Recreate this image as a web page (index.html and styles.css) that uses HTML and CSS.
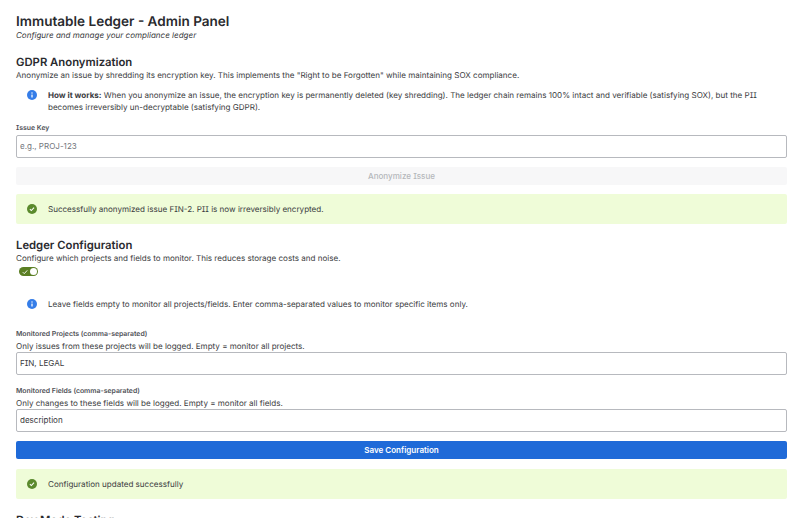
FILE: index.html
```html
<!DOCTYPE html>
<html>
<head>
	<meta charset="utf-8">
	<title>Immutable Ledger - Admin Panel</title>
	<link rel="stylesheet" href="styles.css">
</head>
<body>

<div class="page">
	<h1 class="page-title">Immutable Ledger - Admin Panel</h1>
	<p class="page-sub">Configure and manage your compliance ledger</p>

	<h2 class="section-title">GDPR Anonymization</h2>
	<p class="section-desc">Anonymize an issue by shredding its encryption key. This implements the "Right to be Forgotten" while maintaining SOX compliance.</p>

	<div class="flag">
		<svg class="flag-icon" viewBox="0 0 16 16"><circle cx="8" cy="8" r="8" fill="#357de8"/><rect x="7" y="7" width="2" height="5" rx=".6" fill="#fff"/><circle cx="8" cy="4.8" r="1.1" fill="#fff"/></svg>
		<div class="flag-text"><b>How it works:</b> When you anonymize an issue, the encryption key is permanently deleted (key shredding). The ledger chain remains 100% intact and verifiable (satisfying SOX), but the PII becomes irreversibly un-decryptable (satisfying GDPR).</div>
	</div>

	<label class="field-label label-issue">Issue Key</label>
	<input class="text-input input-issue" type="text" placeholder="e.g., PROJ-123">
	<button class="btn btn-disabled" type="button">Anonymize Issue</button>

	<div class="flag flag-success">
		<svg class="flag-icon" viewBox="0 0 16 16"><circle cx="8" cy="8" r="8" fill="#5b8a2d"/><path d="M4.6 8.2l2.3 2.3 4.4-4.7" fill="none" stroke="#fff" stroke-width="1.7"/></svg>
		<div class="flag-text">Successfully anonymized issue FIN-2. PII is now irreversibly encrypted.</div>
	</div>

	<h2 class="section-title">Ledger Configuration</h2>
	<p class="section-desc">Configure which projects and fields to monitor. This reduces storage costs and noise.</p>

	<div class="toggle">
		<svg class="toggle-check" viewBox="0 0 8 8"><path d="M1 4.2l2 2 4-4.4" fill="none" stroke="#fff" stroke-width="1.2"/></svg>
		<span class="toggle-knob"></span>
	</div>

	<div class="flag flag-config">
		<svg class="flag-icon" viewBox="0 0 16 16"><circle cx="8" cy="8" r="8" fill="#357de8"/><rect x="7" y="7" width="2" height="5" rx=".6" fill="#fff"/><circle cx="8" cy="4.8" r="1.1" fill="#fff"/></svg>
		<div class="flag-text">Leave fields empty to monitor all projects/fields. Enter comma-separated values to monitor specific items only.</div>
	</div>

	<label class="field-label label-projects">Monitored Projects (comma-separated)</label>
	<p class="field-help">Only issues from these projects will be logged. Empty = monitor all projects.</p>
	<input class="text-input" type="text" value="FIN, LEGAL">

	<label class="field-label label-fields">Monitored Fields (comma-separated)</label>
	<p class="field-help">Only changes to these fields will be logged. Empty = monitor all fields.</p>
	<input class="text-input" type="text" value="description">

	<button class="btn btn-primary" type="button">Save Configuration</button>

	<div class="flag flag-success flag-last">
		<svg class="flag-icon" viewBox="0 0 16 16"><circle cx="8" cy="8" r="8" fill="#5b8a2d"/><path d="M4.6 8.2l2.3 2.3 4.4-4.7" fill="none" stroke="#fff" stroke-width="1.7"/></svg>
		<div class="flag-text">Configuration updated successfully</div>
	</div>

	<h2 class="section-title">Dev Mode Testing</h2>
</div>

</body>
</html>
```

FILE: styles.css
```css
* {
	box-sizing: border-box;
}

html, body {
	height: 100%;
	overflow: hidden;
}

body {
	margin: 0;
	font-family: Inter, "Liberation Sans", sans-serif;
	font-size: 8.05px;
	font-feature-settings: "cv08";
	line-height: 12px;
	color: #3a3b40;
	background: #fff;
	text-rendering: geometricPrecision;
}

.page {
	padding: 14px 19px 0 16px;
}

.page-title {
	margin: 0;
	font-size: 13.55px;
	font-feature-settings: normal;
	line-height: 16px;
	font-weight: 600;
	color: #292a2e;
}

.page-sub {
	margin: 0;
	line-height: 11px;
	font-style: italic;
}

.section-title {
	margin: 14.5px 0 0;
	font-size: 11.3px;
	line-height: 13px;
	font-weight: 600;
	color: #292a2e;
}

.section-desc {
	margin: 0;
}

/* Message boxes */
.flag {
	display: flex;
	align-items: flex-start;
	gap: 11px;
	padding: 8px 11px;
	line-height: 12.6px;
	border-radius: 2px;
}

.flag-icon {
	flex: none;
	width: 10px;
	height: 10px;
	margin-top: 1px;
}

.flag-text {
	flex: 1;
}

.flag-success {
	margin-top: 9px;
	padding: 9px 11px 8.9px;
	background: #effcd8;
}

.flag-config {
	margin-top: 13.7px;
}

.flag-last {
	margin-top: 10px;
}

/* Form */
.field-label {
	display: block;
	font-size: 6.9px;
	line-height: 10px;
	font-weight: 600;
	color: #505258;
}

.label-issue {
	margin-top: 1px;
}

.label-projects {
	margin-top: 10.1px;
}

.label-fields {
	margin-top: 11px;
}

.field-help {
	margin: 1px 0 0;
}

.text-input {
	display: block;
	width: 100%;
	height: 23px;
	padding: 0 3px;
	font: inherit;
	color: #3a3b40;
	background: #fff;
	border: 1px solid #b7b9be;
	border-radius: 2px;
	outline: none;
}

.input-issue {
	margin-top: 2px;
}

.text-input::placeholder {
	color: #73767d;
	opacity: 1;
}

.btn {
	display: block;
	width: 100%;
	height: 18px;
	margin-top: 9px;
	padding: 0;
	font: inherit;
	font-weight: 500;
	border: 0;
	border-radius: 2px;
}

.btn-disabled {
	color: #b5b7bb;
	background: #f7f7f8;
}

.btn-primary {
	color: #fff;
	font-weight: 600;
	background: #1f6ad8;
}

/* Toggle */
.toggle {
	position: relative;
	width: 19px;
	height: 9px;
	margin: 3.5px 0 0 3px;
	background: #5b7f24;
	border-radius: 5px;
}

.toggle-check {
	position: absolute;
	left: 2.5px;
	top: 1.5px;
	width: 6px;
	height: 6px;
}

.toggle-knob {
	position: absolute;
	right: 1px;
	top: 1px;
	width: 7px;
	height: 7px;
	background: #fff;
	border-radius: 50%;
}
```
